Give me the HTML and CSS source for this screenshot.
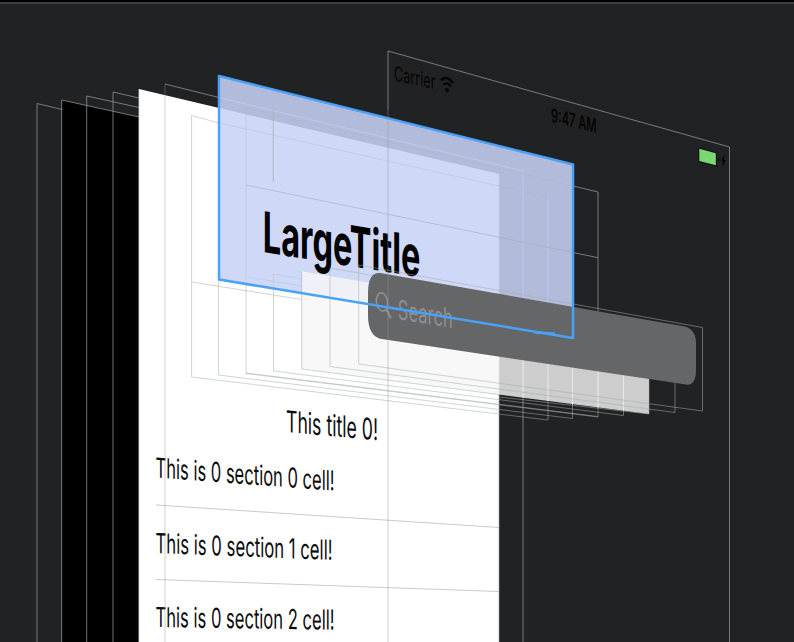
FILE: index.html
```
<!DOCTYPE html>
<html lang="en">
<head>
<meta charset="utf-8">
<title>View hierarchy</title>
<link rel="stylesheet" href="styles.css">
</head>
<body>
<main class="debugger">
<svg class="scene" viewBox="0 0 794 642" width="794" height="642">
  <!-- back layers -->
  <path class="frame" d="M62 109.5L37 103.5V642"/>
  <path class="black" d="M62 100L139 117V642H62Z"/>
  <path class="frame" d="M139 117L61.7 100V642M139 107.5L86.7 96V642M139 98L113 92V642"/>
  <path class="white" d="M139 89L499 174V642H139Z"/>
  <path class="frame" d="M138.7 642V89M499 174V642"/>
  <path class="separator" d="M156 505L499 527.5M156 579.5L499 591.5"/>

  <g class="cell">
    <text transform="matrix(1 .073 0 1 155.5 477.5)" font-size="27.5" textLength="179" lengthAdjust="spacingAndGlyphs">This is 0 section 0 cell!</text>
    <text transform="matrix(1 .039 0 1 155.5 553)" font-size="27.5" textLength="177" lengthAdjust="spacingAndGlyphs">This is 0 section 1 cell!</text>
    <text transform="matrix(1 .015 0 1 155.5 627)" font-size="27.5" textLength="179" lengthAdjust="spacingAndGlyphs">This is 0 section 2 cell!</text>
    <text transform="matrix(1 .091 0 1 286 432)" font-size="30" textLength="92" lengthAdjust="spacingAndGlyphs">This title 0!</text>
  </g>

  <!-- navigation bar layers -->
  <path class="frame soft" d="M165 642V84"/>
  <path class="frame" d="M165 84L219 97.5M523 338V642"/>
  <path class="frame faint" d="M219 123L191.6 115.5V377L548 420V380M191.6 282L301.5 299.5M218.5 280V375L572.5 418.5V338M246 280V373.5L598 417V310M246 373L598 416.5M273.5 287V371L623.5 415.5V370"/>
  <path class="frame" d="M573 186L598 192V310M573 252.5L598 257.7"/>

  <path class="selection-fill" d="M219 76L573 164.5V338L219 279.5Z"/>
  <path class="inner-light" d="M219 97.5L523 171V320M548 197V320"/>
  <path class="inner" d="M219 123L548 197M246 280V108L573 186M273.3 104V182M246 276.7L302 286M273.5 287V274L302 279"/>
  <path class="inner strong" d="M246 185L573 252.5M273.3 115V182"/>

  <path class="panel" d="M301.7 271.3L649 330V414L301.7 369Z"/>
  <path class="panel-line" d="M523 350V398M548 350V401M572.5 350V405M598 350V408M623.5 360V411"/>
  <path class="frame faint" d="M499 397L649 414V375M301.7 271.3V369L499 394.5"/>
  <text class="large" transform="matrix(1 .16 0 1 262.8 252)" font-size="56.5" textLength="157.5" lengthAdjust="spacingAndGlyphs">LargeTitle</text>
  <path class="frame faint" d="M675 380V412.5L330 366.5V268L420 284M358.7 364V265L702.5 327.5V411L358.7 364"/>

  <path class="search" d="M380 273L685 326.5Q696 330 696 343V370Q696 386 686 384.5L380 338.8Q368 335 368 315V293Q368 272 380 273Z"/>
  <g class="glass"><ellipse cx="382" cy="302" rx="5.6" ry="9.2" transform="rotate(-8 382 302)"/><path d="M386.3 309L390.8 318.3"/></g>
  <text class="hint" transform="matrix(1 .165 0 1 397.8 319)" font-size="27" textLength="55" lengthAdjust="spacingAndGlyphs">Search</text>

  <path class="selection" d="M219 76L573 164.5V338L219 279.5Z"/>
  <path class="selection" d="M534 332.3L555 333.8"/>

  <!-- status bar layer -->
  <path class="frame" d="M388 110V51L729.5 147V642"/>
  <path class="frame soft" d="M388 110V642"/>
  <text class="status" transform="matrix(1 .21 0 1 394 80.5)" font-size="20.5" textLength="41.5" lengthAdjust="spacingAndGlyphs">Carrier</text>
  <g class="wifi"><path d="M441 80.3Q447 74.5 453.2 83.2M443.4 84.7Q447 81.3 450.8 86.4"/><path class="dot" d="M444.7 89Q447 87.2 449.5 90.2L447.1 92.8Z"/></g>
  <text class="status clock" transform="matrix(1 .24 0 1 551 122)" font-size="19.5" textLength="45.5" lengthAdjust="spacingAndGlyphs">9:47 AM</text>
  <path class="battery" d="M699.3 148.8L715.8 153.2V165.2L699.3 161Z"/>
  <path class="bolt" d="M718 157.8Q719.6 160 718 162.3ZM724.5 154.5L721 160.8L723 161.4L722.2 167L725.7 160.4L723.6 159.8Z"/>
</svg>
</main>
</body>
</html>
```
FILE: styles.css
```
body { margin: 0; background: #212223; overflow: hidden; }
.debugger {
  box-sizing: border-box;
  width: 794px;
  height: 642px;
  background: linear-gradient(#000 0 2px, #3f3f40 2px 4px, #212223 4px);
}
.scene { display: block; font-family: Inter, "Liberation Sans", sans-serif; }
.scene path { fill: none; }
.scene .black { fill: #000; }
.scene .white { fill: #fff; }
.frame { stroke: rgba(160, 167, 168, .68); stroke-width: 1; }
.frame.soft { stroke: rgba(145, 147, 148, .3); stroke-width: 1.5; }
.frame.faint { stroke: rgba(165, 173, 173, .52); }
.separator { stroke: #c4c4c9; stroke-width: .9; }
.cell { fill: #0c0c0c; font-weight: 400; }
.scene .selection-fill { fill: rgba(200, 210, 246, .87); }
.inner-light { stroke: rgba(202, 213, 249, .5); }
.inner { stroke: rgba(165, 174, 187, .3); }
.inner.strong { stroke: rgba(165, 174, 180, .6); }
.scene .panel { fill: rgba(246, 246, 246, .806); }
.panel-line { stroke: rgba(238, 240, 239, .65); }
.large { fill: #000; font-weight: 700; }
.scene .search { fill: #656668; }
.glass { fill: none; stroke: #8e8f91; stroke-width: 1.6; }
.scene .glass path { stroke-width: 2.2; }
.hint { fill: #8e8f91; font-weight: 400; }
.selection { stroke: #49a2f8; stroke-width: 2.5; stroke-linejoin: round; }
.status { fill: #050505; }
.clock { font-weight: 600; }
.wifi { fill: none; stroke: #050505; stroke-width: 2.4; }
.scene .dot { fill: #050505; stroke: none; }
.scene .battery { fill: #79d873; stroke: #101112; stroke-width: 2; paint-order: stroke; }
.scene .bolt { fill: #060606; }
```
